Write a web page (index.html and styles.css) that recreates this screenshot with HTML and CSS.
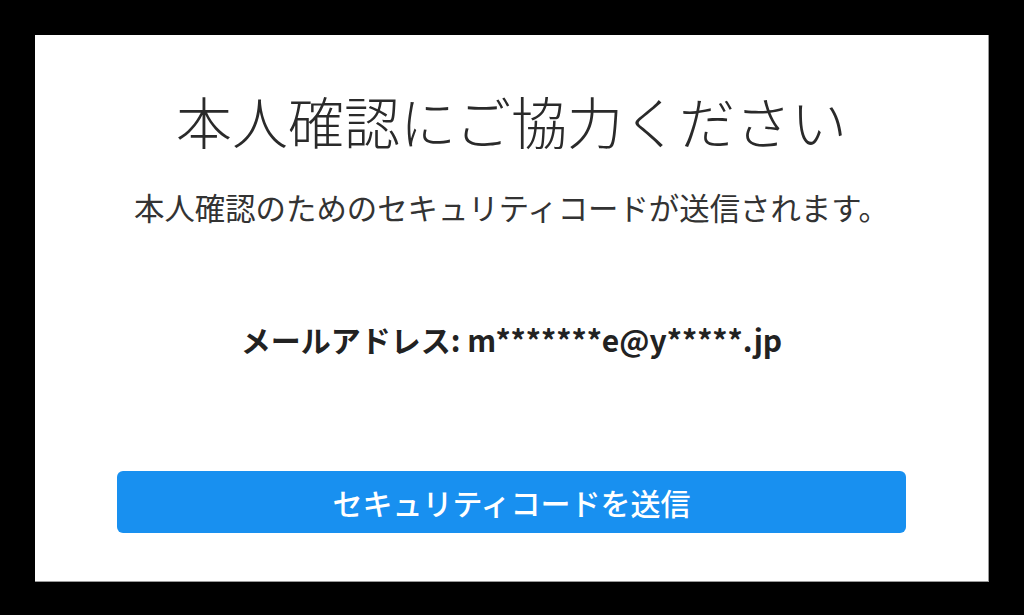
FILE: index.html
```html
<!DOCTYPE html>
<html lang="ja">
<head>
<meta charset="utf-8">
<link rel="stylesheet" href="styles.css">
</head>
<body>
<div class="card">
  <h1 class="title">本人確認にご協力ください</h1>
  <p class="lead">本人確認のためのセキュリティコードが送信されます。</p>
  <p class="email">メールアドレス: m*******e@y*****.jp</p>
  <button class="send">セキュリティコードを送信</button>
</div>
</body>
</html>
```
FILE: styles.css
```css
html, body {
  margin: 0;
  padding: 0;
  background: #000;
  width: 1024px;
  height: 615px;
  overflow: hidden;
}
body {
  padding: 35px 35px 33px 35px;
  box-sizing: border-box;
  font-family: "Noto Sans CJK JP", "Noto Sans", sans-serif;
}
.card {
  width: 954px;
  height: 547px;
  background: #fff;
  border-right: 1px solid #9a9a9a;
  border-bottom: 1px solid #9a9a9a;
  box-sizing: border-box;
  display: flex;
  flex-direction: column;
  align-items: center;
  padding-top: 50px;
}
.title {
  margin: 0;
  font-size: 56px;
  font-weight: 300;
  line-height: 70px;
  color: #2a2a2a;
  letter-spacing: 0;
}
.lead {
  margin: 32px 0 0 0;
  font-size: 30.4px;
  font-weight: 400;
  line-height: 40px;
  color: #333;
}
.email {
  margin: 92px 0 0 0;
  font-family: "Noto Sans CJK JP", sans-serif;
  font-size: 30px;
  font-weight: 700;
  line-height: 40px;
  color: #222;
}
.send {
  margin-top: 112px;
  width: 789px;
  height: 62px;
  border: none;
  border-radius: 6px;
  background: #1890f0;
  color: #fff;
  font-family: "Noto Sans CJK JP", sans-serif;
  font-size: 30px;
  font-weight: 500;
  padding: 0;
}
```
